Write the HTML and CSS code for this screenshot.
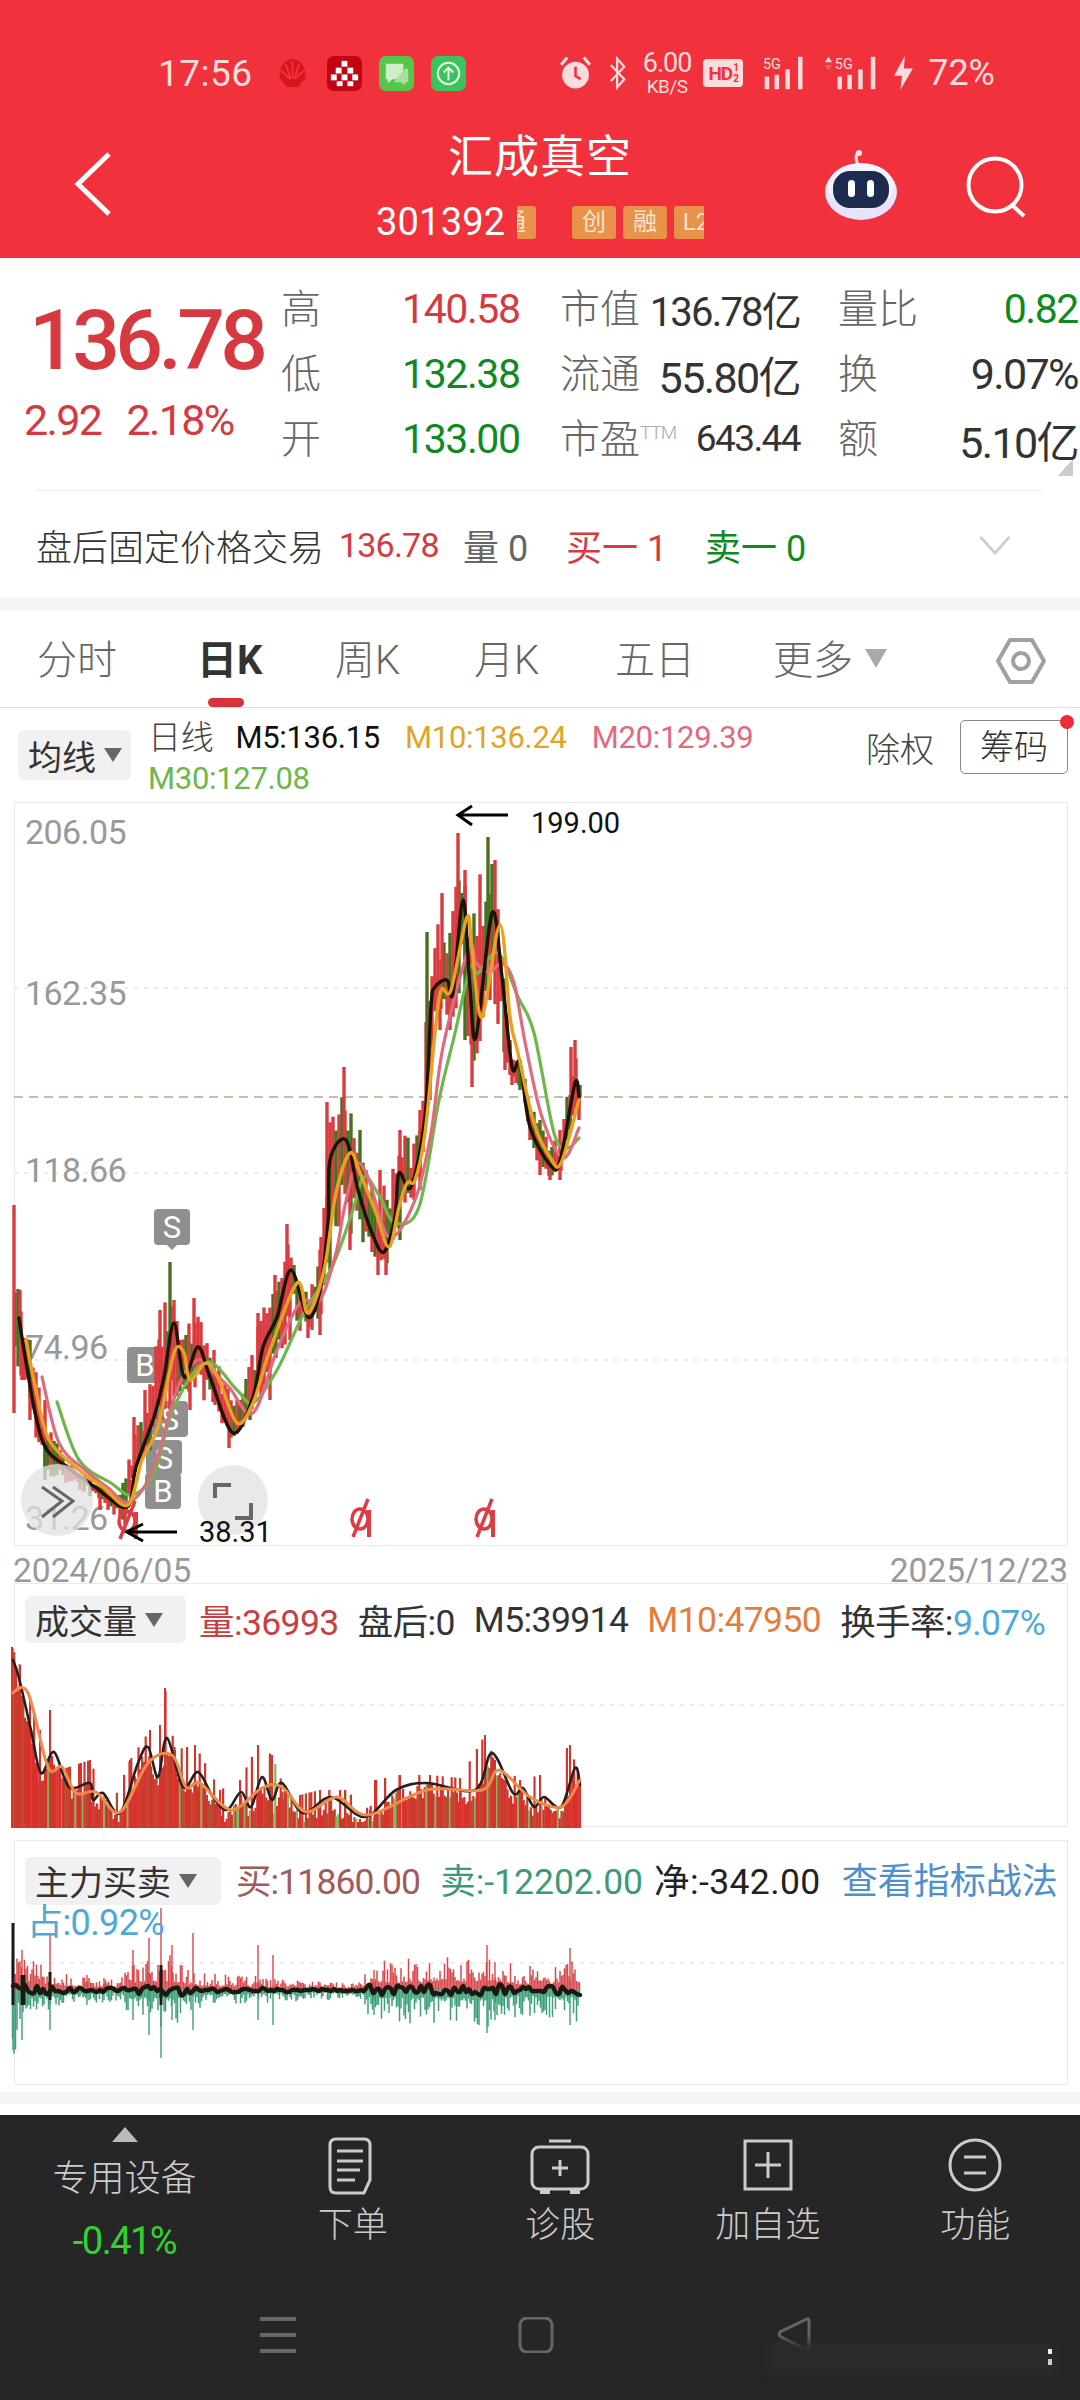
FILE: index.html
```html
<!DOCTYPE html>
<html lang="zh-CN">
<head>
  <meta charset="UTF-8" />
  <meta name="viewport" content="width=device-width, initial-scale=1.0"/>
  <title>汇成真空 301392</title>
  <link rel="stylesheet" href="styles.css">
</head>
<body>

<header class="topbar">
  <div class="status">
    <span class="clock">17:56</span>
    <svg class="st-app shell" viewBox="0 0 32 34"><path d="M3 22 C1 12 8 2 16 2 C24 2 31 12 29 22 L22 31 H10 Z" fill="#d8141c"/><path d="M16 4V22M9 7l5 15M23 7l-5 15M4 14l10 9M28 14l-10 9" stroke="#f1323c" stroke-width="2"/></svg>
    <svg class="st-app" viewBox="0 0 36 36"><rect width="36" height="36" rx="7" fill="#c00614"/><g fill="#fff"><rect x="15" y="5" width="6" height="6"/><rect x="9" y="12" width="6" height="6"/><rect x="21" y="12" width="6" height="6"/><rect x="4" y="19" width="6" height="6"/><rect x="15" y="19" width="6" height="6"/><rect x="26" y="19" width="6" height="6"/><rect x="10" y="26" width="6" height="5"/><rect x="21" y="26" width="6" height="5"/></g></svg>
    <svg class="st-app" viewBox="0 0 36 36"><rect width="36" height="36" rx="7" fill="#55c64a"/><path d="M7 8H25V24H14L9 28V24H7Z" fill="#cdeec8"/><path d="M27 13H30V27H27V30L22 27H15" fill="#a8dfa2"/></svg>
    <svg class="st-app" viewBox="0 0 36 36"><rect width="36" height="36" rx="7" fill="#3cc45c"/><circle cx="18" cy="18" r="11" fill="none" stroke="#e6f8ea" stroke-width="2"/><path d="M18 25V12M13 17l5-5 5 5" fill="none" stroke="#e6f8ea" stroke-width="2"/></svg>
    <span class="status-fill"></span>
    <svg class="st-ico alarm" viewBox="0 0 32 34"><circle cx="16" cy="19" r="13" fill="#fbdcdc"/><path d="M16 11V20L21 23" fill="none" stroke="#f1323c" stroke-width="2.5"/><path d="M2 9L8 2M30 9L24 2" stroke="#fbdcdc" stroke-width="3"/></svg>
    <svg class="st-ico blue" viewBox="0 0 22 40"><path d="M3 11L18 27L10 36V4L18 13L3 29" fill="none" stroke="#fbdcdc" stroke-width="2.5"/></svg>
    <span class="speed"><b>6.00</b><i>KB/S</i></span>
    <span class="hd">HD<small>1<br>2</small></span>
    <svg class="st-ico sig" viewBox="0 0 48 40"><text x="0" y="15" class="sig-text">5G</text><g fill="#fbdcdc"><rect x="2" y="24" width="5" height="14"/><rect x="13" y="22" width="5" height="16"/><rect x="25" y="16" width="5" height="22"/><rect x="39" y="2" width="5" height="36"/></g></svg>
    <svg class="st-ico sig2" viewBox="0 0 60 40"><path d="M1 8L5 2L9 8Z" fill="#fbdcdc"/><path d="M1 11L5 17L9 11Z" fill="#e06068"/><text x="12" y="15" class="sig-text">5G</text><g fill="#fbdcdc"><rect x="15" y="24" width="5" height="14"/><rect x="26" y="22" width="5" height="16"/><rect x="38" y="16" width="5" height="22"/><rect x="52" y="2" width="5" height="36"/></g></svg>
    <svg class="st-ico bolt" viewBox="0 0 24 40"><path d="M14 1L2 23H11L9 39L23 15H13Z" fill="#fbdcdc"/></svg>
    <span class="battery">72%</span>
  </div>
  <div class="nav">
    <svg class="back" viewBox="0 0 40 66"><path d="M35 3L4 33L35 63" fill="none" stroke="#fff" stroke-width="5"/></svg>
    <div class="title">
      <div class="name">汇成真空</div>
      <div class="code-row">
        <span class="code">301392</span>
        <span class="tags">
          <span class="tag tag-cut">通</span>
          <span class="tag">创</span>
          <span class="tag">融</span>
          <span class="tag">L2</span>
        </span>
      </div>
    </div>
    <div class="nav-right">
      <svg class="robot" viewBox="0 0 72 70"><path d="M33 16C31 9 30 5 33 3" fill="none" stroke="#f3e6f0" stroke-width="3"/><circle cx="34" cy="3" r="3" fill="#f3e6f0"/><ellipse cx="36" cy="42" rx="36" ry="28" fill="#e7e3fa"/><ellipse cx="36" cy="36" rx="33" ry="23" fill="#f5f3ff"/><rect x="8" y="21" width="56" height="37" rx="17" fill="#1d2b4f"/><rect x="23" y="30" width="7" height="17" rx="3.5" fill="#fff"/><rect x="42" y="30" width="7" height="17" rx="3.5" fill="#fff"/></svg>
      <svg class="search" viewBox="0 0 62 62"><circle cx="29" cy="29" r="26.5" fill="none" stroke="#fff" stroke-width="4"/><path d="M46 49L58 60" stroke="#fff" stroke-width="4"/></svg>
    </div>
  </div>
</header>

<section class="quote">
  <div class="quote-main">
    <div class="price-col">
      <div class="price">136.78</div>
      <div class="change"><span>2.92</span><span>2.18%</span></div>
    </div>
    <div class="stats">
      <span class="lb">高</span><span class="val up">140.58</span>
      <span class="pair"><span class="lb">市值</span><span class="num tight">136.78亿</span></span>
      <span class="pair end"><span class="lb">量比</span><span class="val down">0.82</span></span>

      <span class="lb">低</span><span class="val down">132.38</span>
      <span class="pair"><span class="lb">流通</span><span class="num">55.80亿</span></span>
      <span class="pair end"><span class="lb">换</span><span class="num">9.07%</span></span>

      <span class="lb">开</span><span class="val down">133.00</span>
      <span class="pair"><span class="lb">市盈<sup class="ttm">TTM</sup></span><span class="num small">643.44</span></span>
      <span class="pair end"><span class="lb">额</span><span class="num">5.10亿</span></span>
    </div>
    <span class="corner"></span>
  </div>
  <div class="divider"></div>
  <div class="after">
    <span class="after-name">盘后固定价格交易</span>
    <span class="up after-price">136.78</span>
    <span class="after-vol">量 0</span>
    <span class="up after-buy">买一 1</span>
    <span class="down after-sell">卖一 0</span>
    <svg class="after-more" viewBox="0 0 36 22"><path d="M2 2L18 20L34 2" fill="none" stroke="#ccc" stroke-width="3"/></svg>
  </div>
</section>

<div class="gap-bar"></div>

<nav class="tabs">
  <span class="tab">分时</span>
  <span class="tab active">日K</span>
  <span class="tab">周K</span>
  <span class="tab">月K</span>
  <span class="tab">五日</span>
  <span class="tab">更多<i class="tri"></i></span>
  <svg class="hex" viewBox="0 0 50 46"><path d="M14 2H36L48 23L36 44H14L2 23Z" fill="none" stroke="#a0a0a0" stroke-width="4" stroke-linejoin="round"/><circle cx="25" cy="23" r="8" fill="none" stroke="#a0a0a0" stroke-width="4"/></svg>
</nav>

<div class="ma-row">
  <span class="pick ma-pick">均线<i class="tri-small"></i></span>
  <div class="ma-values">
    <span class="dk">日线</span>
    <span class="blk">M5:136.15</span>
    <span class="m10">M10:136.24</span>
    <span class="m20">M20:129.39</span>
    <span class="m30">M30:127.08</span>
  </div>
  <span class="fq">除权</span>
  <span class="chips">筹码</span>
</div>

<div class="panel panel-k">
  <svg class="plot" id="kChart" viewBox="14 802 1054 744" width="1054" height="744">
    <defs>
      <g id="mark" fill="none" stroke="#de3c44" stroke-width="3.5">
        <ellipse cx="0" cy="0" rx="8" ry="10"/>
        <path d="M-7 18L8 -20"/>
        <path d="M9 -9V18" stroke-width="4"/>
      </g>
    </defs>
    <g class="grid">
      <line x1="14" x2="1068" y1="988" y2="988"/>
      <line x1="14" x2="1068" y1="1173" y2="1173"/>
      <line x1="14" x2="1068" y1="1360" y2="1360"/>
    </g>
    <line class="last-line" x1="14" x2="1068" y1="1097" y2="1097"/>
    <g class="axis">
      <text x="25" y="844">206.05</text>
      <text x="25" y="1005">162.35</text>
      <text x="25" y="1182">118.66</text>
      <text x="25" y="1359">74.96</text>
      <text x="25" y="1530">31.26</text>
    </g>
    <g class="flags">
      <path d="M158 1209H186Q190 1209 190 1213V1241Q190 1245 186 1245H177L172 1250L167 1245H158Q154 1245 154 1241V1213Q154 1209 158 1209Z"/>
      <text x="172" y="1238">S</text>
      <rect x="127" y="1347" width="36" height="36" rx="4"/>
      <text x="145" y="1376">B</text>
      <rect x="152" y="1401" width="36" height="36" rx="4"/>
      <text x="170" y="1430">S</text>
      <rect x="146" y="1440" width="36" height="35" rx="4"/>
      <text x="164" y="1469">S</text>
      <rect x="145" y="1473" width="36" height="36" rx="4"/>
      <text x="163" y="1502">B</text>
    </g>
    <g id="candles"></g>
    <g id="maLines"></g>
    <circle cx="57" cy="1500" r="36" class="float-btn"/>
    <path d="M42 1487L62 1501L42 1517M53 1487L73 1501L53 1517" fill="none" stroke="#666" stroke-width="3"/>
    <circle cx="233" cy="1500" r="35" class="float-btn"/>
    <path d="M215 1498V1485H231M235 1518H251V1503" fill="none" stroke="#666" stroke-width="4"/>
    <use href="#mark" x="127" y="1521"/>
    <use href="#mark" x="360" y="1519"/>
    <use href="#mark" x="484" y="1519"/>
    <path d="M458 815H508M472 806L458 815L472 825" fill="none" stroke="#000" stroke-width="3"/>
    <text x="531" y="833" class="tip">199.00</text>
    <path d="M127 1532H177M143 1524L127 1532L143 1541" fill="none" stroke="#000" stroke-width="3"/>
    <text x="199" y="1542" class="tip">38.31</text>
  </svg>
</div>

<div class="dates"><span>2024/06/05</span><span>2025/12/23</span></div>

<div class="panel panel-vol">
  <svg class="plot" id="volChart" viewBox="14 1583 1054 244" width="1054" height="244">
    <g class="grid"><line x1="50" x2="1068" y1="1705" y2="1705"/></g>
    <g id="volBars"></g>
    <g id="volLines"></g>
  </svg>
  <div class="panel-head vol-head">
    <span class="pick">成交量<i class="tri-small"></i></span>
    <span class="up-dim">量:36993</span>
    <span>盘后:0</span>
    <span>M5:39914</span>
    <span class="orange">M10:47950</span>
    <span>换手率:<em class="sky">9.07%</em></span>
  </div>
</div>

<div class="panel panel-main">
  <svg class="plot" id="flowChart" viewBox="14 1840 1054 245" width="1054" height="245">
    <g class="grid"><line x1="30" x2="1068" y1="1963" y2="1963"/></g>
    <g id="flowBars"></g>
  </svg>
  <div class="panel-head flow-head">
    <span class="pick">主力买卖<i class="tri-small"></i></span>
    <span class="buy">买:11860.00</span>
    <span class="sell">卖:-12202.00</span>
    <span class="net">净:-342.00</span>
    <span class="link">查看指标战法</span>
    <span class="share">占:0.92%</span>
  </div>
</div>

<div class="foot-gap"></div>

<footer class="foot">
  <div class="tools">
    <div class="tool tool-sector">
      <i class="tri-up"></i>
      <span class="sector-name">专用设备</span>
      <span class="sector-pct">-0.41%</span>
    </div>
    <div class="tool">
      <svg class="tool-ico" viewBox="0 0 60 60"><path d="M13 2H41Q47 2 47 8V43L41 56H13Q7 56 7 50V8Q7 2 13 2Z" fill="none" stroke="#ccc" stroke-width="3"/><path d="M14 14H40M14 24H40M14 33H37M14 43H32" stroke="#ccc" stroke-width="3"/></svg>
      <span>下单</span>
    </div>
    <div class="tool">
      <svg class="tool-ico" viewBox="0 0 60 60"><path d="M19 4H41" stroke="#ccc" stroke-width="3"/><rect x="2" y="10" width="56" height="42" rx="7" fill="none" stroke="#ccc" stroke-width="3"/><path d="M30 23V39M22 31H38" stroke="#ccc" stroke-width="3"/><path d="M10 52H20V57H10ZM40 52H50V57H40Z" fill="#ccc"/></svg>
      <span>诊股</span>
    </div>
    <div class="tool">
      <svg class="tool-ico" viewBox="0 0 60 60"><rect x="7" y="4" width="46" height="48" fill="none" stroke="#ccc" stroke-width="3"/><path d="M30 15V41M17 28H43" stroke="#ccc" stroke-width="3"/></svg>
      <span>加自选</span>
    </div>
    <div class="tool">
      <svg class="tool-ico" viewBox="0 0 60 60"><circle cx="30" cy="28" r="25" fill="none" stroke="#ccc" stroke-width="3"/><path d="M19 20H41M19 36H41" stroke="#ccc" stroke-width="3"/></svg>
      <span>功能</span>
    </div>
  </div>
  <div class="sysnav">
    <svg viewBox="0 0 36 36"><path d="M0 2H36M0 18H36M0 34H36" stroke="#666" stroke-width="4"/></svg>
    <svg viewBox="0 0 36 36"><rect x="2" y="1" width="32" height="34" rx="7" fill="none" stroke="#666" stroke-width="3"/></svg>
    <svg viewBox="0 0 36 36"><path d="M31 2Q33 1 33 4V34L5 20Q2 18 4 15L31 2Z" fill="none" stroke="#666" stroke-width="3"/></svg>
  </div>
  <div class="smudge"></div>
  <div class="speck"></div>
</footer>

<script src="chart.js"></script>
</body>
</html>
```

FILE: styles.css
```css
* {
  box-sizing: border-box;
}

body {
  margin: 0;
  width: 1080px;
  height: 2400px;
  overflow: hidden;
  background: #fff;
  font-family: Roboto, "Noto Sans CJK SC", sans-serif;
  color: #333;
}

i, em {
  font-style: normal;
}

.up { color: #d63a40; }
.down { color: #0f8a1e; }

/* red header */
.topbar {
  height: 258px;
  background: #f1323c;
  color: #fff;
}

.status {
  height: 100px;
  padding: 46px 85px 0 158px;
  display: flex;
  align-items: center;
  color: #fbdcdc;
}

.clock {
  font-size: 37px;
  width: 119px;
  letter-spacing: 0.5px;
}

.st-app {
  width: 35px;
  height: 35px;
  margin-right: 17px;
}

.shell {
  width: 31px;
  margin-right: 19px;
}

.status-fill {
  flex: 1;
}

.st-ico {
  height: 36px;
}

.alarm { width: 33px; margin-right: 15px; }
.blue { width: 22px; margin-right: 10px; }

.speed {
  width: 56px;
  margin-right: 8px;
  display: flex;
  flex-direction: column;
  align-items: center;
  line-height: 1;
}

.speed b {
  font-weight: 400;
  font-size: 27px;
  letter-spacing: -1px;
}

.speed i {
  font-size: 19px;
  letter-spacing: -0.5px;
}

.hd {
  width: 40px;
  height: 28px;
  margin-right: 18px;
  background: #fbdcdc;
  color: #f1323c;
  border-radius: 4px;
  font-size: 19px;
  font-weight: 700;
  letter-spacing: -1px;
  display: flex;
  align-items: center;
  justify-content: center;
}

.hd small {
  font-size: 10px;
  line-height: 11px;
  margin-left: 1px;
}

.sig { width: 47px; margin-right: 13px; }
.sig2 { width: 60px; margin-right: 10px; }
.bolt { width: 24px; margin-right: 13px; }

.sig-text {
  font-size: 16px;
  fill: #fbdcdc;
  font-family: Roboto, sans-serif;
}

.battery {
  font-size: 36px;
}

.nav {
  height: 158px;
  display: grid;
  grid-template-columns: minmax(0, 1fr) 330px minmax(0, 1fr);
}

.back {
  width: 40px;
  height: 66px;
  margin: 51px 0 0 74px;
}

.title {
  display: flex;
  flex-direction: column;
  align-items: center;
  padding-top: 32px;
}

.name {
  font-size: 45px;
  line-height: 52px;
  letter-spacing: 1px;
}

.code-row {
  margin-top: 20px;
  height: 36px;
  display: flex;
  align-items: center;
}

.code {
  font-size: 38px;
  letter-spacing: 0.2px;
  width: 141px;
}

.tags {
  width: 187px;
  overflow: hidden;
  display: flex;
  gap: 7px;
}

.tag {
  flex: none;
  width: 44px;
  height: 33px;
  border-radius: 3px;
  background: #e8924a;
  color: #fbe3cc;
  font-size: 24px;
  line-height: 33px;
  text-align: center;
}

.tag-cut {
  margin-left: -25px;
  margin-right: 29px;
}

.nav-right {
  display: flex;
  padding: 50px 0 0 120px;
  align-items: flex-start;
}

.robot {
  width: 72px;
  height: 70px;
  flex: none;
}

.search {
  width: 62px;
  height: 62px;
  margin: 6px 0 0 69px;
  flex: none;
}

/* quote block */
.quote {
  height: 340px;
}

.quote-main {
  position: relative;
  display: flex;
  height: 232px;
  padding-top: 18px;
}

.price-col {
  width: 281px;
  flex: none;
  padding-top: 32px;
  color: #d63a40;
}

.price {
  font-size: 84px;
  line-height: 66px;
  font-weight: 500;
  padding-left: 29px;
  letter-spacing: -4.6px;
}

.change {
  margin-top: 28px;
  padding-left: 24px;
  font-size: 43px;
  line-height: 36px;
  letter-spacing: -1.6px;
  display: flex;
  gap: 25px;
}

.stats {
  width: 799px;
  display: grid;
  grid-template-columns: 121px 158px 278px 240px;
  grid-auto-rows: 65px;
  align-items: center;
  font-size: 41px;
}

.lb {
  color: #666;
  font-size: 40px;
  font-weight: 300;
  padding-bottom: 6px;
}

.val {
  letter-spacing: -1.4px;
}

.num {
  color: #333;
  font-size: 43px;
  letter-spacing: -1.6px;
}

.num.tight {
  font-size: 40px;
  letter-spacing: -1.8px;
}

.num.small {
  font-size: 37px;
}

.pair {
  display: flex;
  align-items: center;
  justify-content: space-between;
  width: 240px;
}

.ttm {
  font-size: 19px;
  color: #aaa;
  vertical-align: 14px;
  line-height: 0;
  letter-spacing: -1px;
}

.corner {
  position: absolute;
  left: 1057px;
  top: 202px;
  width: 16px;
  height: 16px;
  background: linear-gradient(135deg, transparent 50%, #ccc 50%);
}

.divider {
  height: 1px;
  margin: 0 37px 0 36px;
  background: #eee;
}

.after {
  height: 107px;
  padding: 0 68px 0 36px;
  display: flex;
  align-items: center;
  font-size: 36px;
}

.after-name {
  font-size: 36px;
  font-weight: 300;
  width: 303px;
}

.after-price {
  width: 124px;
  font-size: 34px;
  letter-spacing: -0.8px;
}

.after-vol {
  width: 103px;
  color: #666;
}

.after-buy {
  width: 139px;
}

.after-sell {
  flex: 1;
}

.after-more {
  width: 34px;
  height: 20px;
}

.gap-bar {
  height: 13px;
  background: #f5f5f5;
}

/* period tabs */
.tabs {
  position: relative;
  height: 97px;
  padding-left: 37px;
  padding-top: 27px;
  border-bottom: 1px solid #ddd;
  display: grid;
  grid-template-columns: 160px 138px 139px 141px 158px 223px 48px;
  font-size: 40px;
  font-weight: 300;
  color: #666;
  align-items: start;
}

.tab {
  position: relative;
  line-height: 46px;
}

.tab.active {
  color: #333;
  font-weight: 700;
}

.tab.active::after {
  content: "";
  position: absolute;
  left: 11px;
  top: 60px;
  width: 36px;
  height: 9px;
  border-radius: 5px;
  background: #d9333a;
}

.tri {
  display: inline-block;
  margin-left: 12px;
  vertical-align: 6px;
  border-left: 11px solid transparent;
  border-right: 11px solid transparent;
  border-top: 19px solid #aaa;
}

.hex {
  width: 50px;
  height: 46px;
}

/* moving average legend */
.ma-row {
  height: 94px;
  padding: 22px 12px 0 18px;
  display: flex;
  align-items: flex-start;
  font-size: 31px;
}

.pick {
  background: #f1f1f1;
  border-radius: 6px;
  color: #333;
  font-size: 34px;
  display: flex;
  align-items: center;
  padding: 0 9px 0 10px;
}

.ma-pick {
  width: 113px;
  height: 50px;
  flex: none;
}

.tri-small {
  flex: none;
  margin-left: 8px;
  border-left: 9px solid transparent;
  border-right: 9px solid transparent;
  border-top: 14px solid #666;
}

.ma-values {
  width: 640px;
  margin: -13px 0 0 17px;
  display: flex;
  flex-wrap: wrap;
  column-gap: 25px;
  line-height: 41px;
  letter-spacing: -0.3px;
}

.dk {
  font-size: 33px;
  margin-right: -3px;
  white-space: nowrap;
  color: #444;
  font-weight: 300;
}

.blk { color: #111; }
.m10 { color: #e0a526; }
.m20 { color: #e06a7e; }
.m30 { color: #6cb84a; }

.fq {
  width: 94px;
  margin-left: auto;
  font-size: 34px;
  line-height: 40px;
  color: #444;
  font-weight: 300;
  flex: none;
}

.chips {
  position: relative;
  width: 108px;
  height: 54px;
  margin-top: -10px;
  border: 1px solid #888;
  border-radius: 5px;
  color: #333;
  font-size: 34px;
  font-weight: 300;
  line-height: 52px;
  text-align: center;
  flex: none;
}

.chips::after {
  content: "";
  position: absolute;
  right: -7px;
  top: -6px;
  width: 14px;
  height: 14px;
  border-radius: 50%;
  background: #ee2b36;
}

/* chart panels */
.panel {
  position: relative;
  margin: 0 12px 0 14px;
  border: 1px solid #e9e9e9;
}

.panel-k { height: 744px; }
.panel-vol { height: 244px; }
.panel-main { height: 245px; margin-top: 13px; }

.plot {
  position: absolute;
  left: -1px;
  top: -1px;
  overflow: visible;
}

.grid line {
  stroke: #e6e6e6;
  stroke-width: 1.5;
  stroke-dasharray: 4 6;
}

.last-line {
  stroke: #b5a98c;
  stroke-width: 1.5;
  stroke-dasharray: 9 6;
}

.axis text {
  font-size: 34px;
  fill: #999;
  letter-spacing: -0.6px;
}

.flags path, .flags rect {
  fill: #8f8f8f;
}

.flags text {
  font-size: 31px;
  fill: #fff;
  text-anchor: middle;
}

.float-btn {
  fill: #e2e2e2;
  fill-opacity: 0.75;
}

.tip {
  font-size: 29px;
  fill: #111;
}

.dates {
  height: 37px;
  padding: 0 12px 0 13px;
  display: flex;
  justify-content: space-between;
  font-size: 33.5px;
  line-height: 50px;
  color: #999;
}

.panel-head {
  position: relative;
  padding: 10px 0 0 10px;
  display: flex;
  align-items: center;
  font-size: 35.5px;
  color: #333;
  letter-spacing: -0.6px;
}

.vol-head {
  gap: 19px;
}

.vol-head .pick {
  width: 161px;
  height: 47px;
  margin-right: -6px;
  letter-spacing: 0;
}

.up-dim { color: #c8403f; }
.orange { color: #e57c3e; }
.sky { color: #4fa8d8; }

.flow-head {
  flex-wrap: wrap;
  padding-top: 11px;
}

.flow-head .pick {
  width: 196px;
  height: 48px;
  margin-right: 15px;
  letter-spacing: 0;
}

.buy { color: #a35a5c; margin-right: 20px; letter-spacing: -0.9px; padding-bottom: 5px; }
.sell { color: #3c9a76; margin-right: 11px; letter-spacing: 0; padding-bottom: 5px; }
.net { color: #222; margin-right: 21px; letter-spacing: 0.4px; padding-bottom: 5px; }

.link {
  color: #4f8fcf;
  font-size: 36px;
  letter-spacing: 0;
  white-space: nowrap;
  padding-bottom: 5px;
}

.share {
  width: 100%;
  margin: -7px 0 0 2px;
  font-size: 36px;
  color: #4fa8d8;
  line-height: 42px;
}

.foot-gap {
  height: 30px;
  padding-top: 7px;
}

.foot-gap::before {
  content: "";
  display: block;
  height: 12px;
  background: #f5f5f5;
}

/* dark bottom bar */
.foot {
  position: relative;
  height: 285px;
  background: #262626;
  color: #ccc;
}

.tools {
  display: grid;
  grid-template-columns: 249px repeat(4, 207.5px);
  height: 165px;
}

.tool {
  display: flex;
  flex-direction: column;
  align-items: center;
  padding-top: 22px;
  font-size: 35px;
  line-height: 50px;
  font-weight: 300;
}

.tool-ico {
  width: 60px;
  height: 60px;
  margin-bottom: 4px;
}

.tool-sector {
  padding-top: 12px;
  font-size: 36px;
}

.tri-up {
  border-left: 13px solid transparent;
  border-right: 13px solid transparent;
  border-bottom: 15px solid #bbb;
  margin-bottom: 12px;
}

.sector-name {
  line-height: 50px;
}

.sector-pct {
  margin-top: 12px;
  color: #2ed52e;
  font-size: 38px;
  font-weight: 400;
  letter-spacing: -1.5px;
}

.sysnav {
  margin-top: 37px;
  padding-right: 8px;
  display: flex;
  justify-content: center;
  gap: 222px;
}

.sysnav svg {
  width: 36px;
  height: 36px;
}

.smudge {
  position: absolute;
  left: 770px;
  top: 227px;
  width: 285px;
  height: 33px;
  background: #2b2b2b;
  filter: blur(5px);
}

.speck {
  position: absolute;
  left: 1048px;
  top: 234px;
  width: 4px;
  height: 16px;
  background: linear-gradient(#eee 30%, transparent 30%, transparent 60%, #ccc 60%);
}
```

FILE: chart.js
```js
// seeded random, so every load draws the same bars
let seed = 1392;
function rnd() {
  seed = (seed * 16807) % 2147483647;
  return seed / 2147483647;
}

function lerp(pts, x) {
  if (x <= pts[0][0]) return pts[0][1];
  for (let i = 1; i < pts.length; i++) {
    if (x <= pts[i][0]) {
      const a = pts[i - 1], b = pts[i];
      return a[1] + (b[1] - a[1]) * (x - a[0]) / (b[0] - a[0]);
    }
  }
  return pts[pts.length - 1][1];
}

function bar(x, y1, y2, color, w) {
  return `<line x1="${x.toFixed(1)}" x2="${x.toFixed(1)}" y1="${y1.toFixed(1)}" y2="${y2.toFixed(1)}" stroke="${color}" stroke-width="${w}"/>`;
}

// catmull-rom through the points
function curve(pts, color, w) {
  let d = `M${pts[0][0]} ${pts[0][1]}`;
  for (let i = 0; i < pts.length - 1; i++) {
    const p0 = pts[i - 1] || pts[i], p1 = pts[i], p2 = pts[i + 1], p3 = pts[i + 2] || p2;
    const c1x = p1[0] + (p2[0] - p0[0]) / 6, c1y = p1[1] + (p2[1] - p0[1]) / 6;
    const c2x = p2[0] - (p3[0] - p1[0]) / 6, c2y = p2[1] - (p3[1] - p1[1]) / 6;
    d += `C${c1x.toFixed(1)} ${c1y.toFixed(1)} ${c2x.toFixed(1)} ${c2y.toFixed(1)} ${p2[0]} ${p2[1]}`;
  }
  return `<path d="${d}" fill="none" stroke="${color}" stroke-width="${w}" stroke-linejoin="round" stroke-linecap="round"/>`;
}

const m5 = [[19,1318],[24,1350],[36,1417],[47,1450],[67,1467],[95,1487],[127,1507],[136,1467],[154,1417],[164,1377],[174,1323],[184,1377],[198,1347],[210,1377],[233,1433],[253,1397],[263,1347],[277,1317],[291,1270],[308,1317],[320,1290],[328,1223],[330,1160],[346,1140],[358,1190],[372,1233],[384,1252],[395,1217],[399,1173],[411,1187],[425,1117],[431,1007],[435,987],[447,980],[453,993],[463,900],[470,987],[476,1037],[492,913],[502,977],[512,1067],[520,1063],[530,1127],[552,1167],[561,1157],[575,1083],[579,1097]];
const m10 = [[26,1340],[36,1390],[49,1440],[79,1470],[103,1487],[128,1505],[142,1460],[158,1427],[174,1353],[184,1353],[190,1380],[206,1363],[219,1380],[237,1423],[253,1403],[269,1353],[297,1283],[308,1313],[324,1270],[336,1193],[350,1153],[360,1173],[376,1213],[389,1247],[399,1207],[407,1183],[415,1180],[425,1133],[435,1033],[441,990],[451,990],[467,917],[472,950],[482,1017],[500,925],[510,1017],[518,1053],[534,1123],[550,1157],[561,1163],[579,1100]];
const m20 = [[42,1377],[59,1443],[85,1470],[107,1487],[130,1502],[154,1467],[178,1387],[198,1360],[213,1372],[229,1387],[253,1413],[277,1350],[300,1303],[320,1300],[336,1253],[344,1210],[356,1165],[368,1177],[389,1237],[415,1200],[431,1133],[443,1047],[469,948],[476,963],[490,972],[502,963],[514,983],[526,1047],[542,1117],[563,1158],[579,1128]];
const m30 = [[57,1402],[79,1460],[111,1483],[132,1495],[154,1473],[174,1407],[206,1362],[237,1390],[253,1403],[277,1370],[304,1313],[332,1267],[352,1213],[364,1177],[380,1197],[395,1223],[419,1207],[439,1100],[455,1033],[470,968],[478,973],[498,953],[518,997],[534,1033],[554,1133],[567,1148],[579,1138]];

const highs = [[14,1205],[20,1290],[30,1340],[45,1400],[60,1450],[90,1480],[120,1495],[134,1417],[145,1390],[160,1310],[170,1262],[180,1340],[194,1298],[214,1350],[240,1400],[258,1313],[275,1275],[287,1224],[300,1290],[320,1250],[327,1102],[344,1067],[360,1130],[380,1170],[400,1130],[420,1110],[427,932],[442,893],[458,833],[465,870],[488,837],[495,860],[510,1040],[520,1060],[540,1120],[560,1130],[571,1047],[575,1040],[580,1085]];
const lows = [[14,1413],[22,1380],[30,1420],[45,1480],[80,1490],[100,1510],[125,1525],[130,1480],[150,1450],[170,1410],[190,1410],[215,1405],[229,1448],[250,1420],[270,1400],[290,1340],[308,1338],[320,1335],[330,1270],[350,1250],[372,1252],[378,1275],[386,1275],[400,1240],[420,1190],[430,1100],[440,1030],[450,1030],[465,1040],[472,1087],[490,1000],[505,1070],[512,1085],[520,1090],[530,1140],[540,1175],[550,1180],[560,1180],[570,1130],[579,1120]];

// candles
let html = '';
for (let x = 15; x < 580; x += 3) {
  const mid = lerp(m5, Math.max(x, 19));
  const top = mid - (mid - lerp(highs, x)) * (0.25 + 0.6 * rnd());
  const bot = mid + (lerp(lows, x) - mid) * (0.25 + 0.6 * rnd());
  html += bar(x, top, bot, rnd() < 0.68 ? '#d93b3f' : '#47701f', 3.4);
}
// the tall wicks sit right on the envelope points
highs.forEach((p, i) => {
  html += bar(p[0], p[1], lerp(m5, Math.max(p[0], 19)), i % 4 === 2 ? '#47701f' : '#d93b3f', 3.4);
});
lows.forEach((p, i) => {
  html += bar(p[0], lerp(m5, Math.max(p[0], 19)), p[1], i % 5 === 3 ? '#47701f' : '#d93b3f', 3.4);
});
document.getElementById('candles').innerHTML = html;

document.getElementById('maLines').innerHTML =
  curve(m30, '#6cb84a', 3.2) +
  curve(m20, '#e06a7e', 3.2) +
  curve(m5, '#1c1208', 3.4) +
  curve(m10, '#eaa021', 3.4);

// volume panel
const volTop = [[12,1647],[20,1665],[30,1700],[40,1730],[50,1710],[60,1770],[90,1760],[110,1810],[130,1760],[150,1730],[160,1725],[165,1688],[175,1750],[195,1745],[220,1790],[240,1780],[258,1745],[272,1755],[285,1790],[300,1795],[320,1790],[345,1790],[370,1810],[375,1780],[400,1775],[430,1775],[460,1778],[485,1735],[495,1760],[520,1780],[540,1775],[570,1745],[580,1780]];
const volM5 = [[13,1660],[19,1678],[31,1730],[41,1773],[54,1752],[69,1787],[90,1783],[93,1800],[103,1793],[120,1813],[138,1763],[148,1747],[158,1777],[167,1738],[183,1787],[198,1772],[213,1797],[227,1810],[241,1792],[251,1807],[262,1777],[272,1800],[282,1783],[303,1813],[331,1797],[365,1817],[396,1790],[427,1783],[475,1790],[492,1753],[513,1793],[523,1788],[534,1807],[544,1797],[561,1807],[575,1768],[580,1785]];
const volM10 = [[12,1693],[28,1693],[48,1767],[62,1767],[76,1793],[96,1792],[120,1812],[148,1763],[172,1755],[186,1787],[200,1783],[231,1810],[262,1788],[282,1787],[306,1812],[337,1797],[368,1815],[427,1790],[482,1790],[499,1770],[530,1797],[561,1807],[580,1780]];

html = '';
for (let x = 12.5; x < 581; x += 1.8) {
  const top = lerp(volTop, x);
  const base = lerp(volM5, x) + 8;
  const y = rnd() < 0.22 ? top : base + (rnd() - 0.5) * 16;
  const r = rnd();
  html += bar(x, Math.min(y, 1822), 1828, r < 0.1 ? '#7cb860' : (r < 0.35 ? '#b8452c' : '#d8322c'), 2.2);
}
volTop.forEach(p => { html += bar(p[0], p[1], 1828, '#d8322c', 2); });
document.getElementById('volBars').innerHTML = html;
document.getElementById('volLines').innerHTML = curve(volM5, '#26201c', 2.6) + curve(volM10, '#f08a4a', 3);

// main force panel: red above the zero line, green under it
const flowAmp = [[12,60],[30,30],[60,16],[120,10],[130,26],[170,34],[200,16],[250,14],[290,10],[360,8],[372,30],[440,30],[490,38],[520,22],[580,28]];
const spikes = [[13,1925,2050],[22,1950,2040],[50,1935,2030],[87,1975,2005],[104,1978,2000],[133,1950,2020],[149,1938,2035],[161,1908,2058],[172,1945,2020],[193,1933,2030],[258,1945,2020],[273,1955,2025],[374,1970,2015],[487,1945,2033],[495,1962,2020],[570,1948,2025]];
const zero = 1990;

html = '';
for (let x = 12.5; x < 581; x += 1.5) {
  const amp = lerp(flowAmp, x);
  const r1 = rnd(), r2 = rnd();
  html += bar(x, zero - amp * (0.25 + 0.8 * r1 * r1), zero, '#d9474a', 1.5);
  html += bar(x, zero, zero + amp * (0.25 + 0.9 * r2 * r2), '#3ea078', 1.5);
}
spikes.forEach(s => {
  html += bar(s[0], s[1], zero, '#d9474a', 1.4) + bar(s[0], zero, s[2], '#3ea078', 1.4);
});
const netLine = [];
for (let x = 13; x < 581; x += 3) {
  const amp = lerp(flowAmp, x);
  netLine.push([x, Math.round(zero + (rnd() - 0.5) * Math.min(amp * 0.35, 10))]);
}
html += curve(netLine, '#1a1a14', 4.4);
html += bar(13, 1923, 2005, '#1a1a14', 3);
html += bar(23, 1975, 2005, '#1a1a14', 5);
html += bar(50, 1972, 2000, '#1a1a14', 3);
html += bar(161, 1965, 2005, '#1a1a14', 3);
document.getElementById('flowBars').innerHTML = html;
```
